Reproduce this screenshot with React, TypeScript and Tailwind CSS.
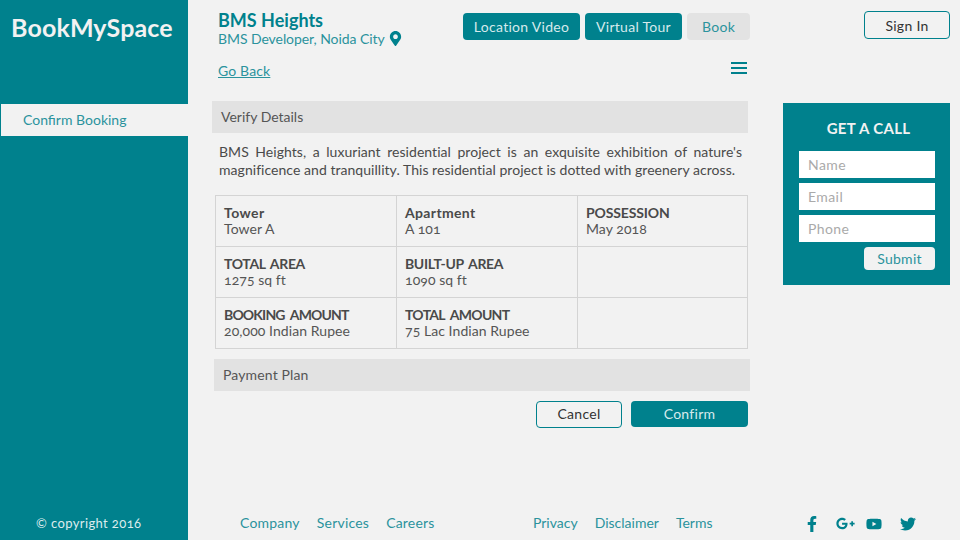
import { FaFacebookF, FaGooglePlusG, FaMapMarkerAlt, FaTwitter, FaYoutube } from 'react-icons/fa'

const rows = [
  [
    { label: 'Tower', value: 'Tower A', labelClass: 'tracking-[0.03em]' },
    { label: 'Apartment', value: 'A 101', labelClass: 'tracking-[0.025em]' },
    { label: 'POSSESSION', value: 'May 2018', labelClass: 'tracking-[-0.01em]' },
  ],
  [
    { label: 'TOTAL AREA', value: '1275 sq ft', labelClass: 'tracking-[-0.025em] [word-spacing:2px]' },
    { label: 'BUILT-UP AREA', value: '1090 sq ft', labelClass: 'tracking-[-0.025em] [word-spacing:2px]' },
    null,
  ],
  [
    { label: 'BOOKING AMOUNT', value: '20,000 Indian Rupee', labelClass: 'tracking-[-0.06em] [word-spacing:3px]' },
    { label: 'TOTAL AMOUNT', value: '75 Lac Indian Rupee', labelClass: 'tracking-[-0.05em] [word-spacing:3px]' },
    null,
  ],
]

export default function App() {
  return (
    <div className="flex h-[540px] w-[960px] overflow-hidden bg-[#f2f2f2] font-['Lato',sans-serif] text-[14px] text-[#4a4a4a] oldstyle-nums">
      {/* Sidebar */}
      <aside className="flex w-[188px] shrink-0 flex-col bg-[#00818d]">
        <div className="pt-[11px] pl-[11px] text-[25px] leading-[32px] font-bold tracking-[0.005em] whitespace-nowrap text-[#f2f2f2]">BookMySpace</div>
        <div className="mt-[61px] ml-px flex h-[32px] items-center bg-[#f2f2f2] pb-[2px] pl-[22px] text-[14px] text-[#2b939d]">Confirm Booking</div>
        <div className="mt-auto pb-[9px] pl-[36px] text-[13px] leading-[16px] tracking-[0.03em] text-[#dcecee]">© copyright 2016</div>
      </aside>

      <div className="flex min-w-0 flex-1 flex-col">
        <div className="flex flex-1">
          {/* Center column */}
          <main className="w-[595px] shrink-0 pl-[24px]">
            <div className="flex w-[538px] items-start justify-between pt-[10px] pl-[6px]">
              <div>
                <div className="text-[18px] leading-[20px] font-bold text-[#00818d]">BMS Heights</div>
                <div className="flex items-center gap-[3px] text-[14px] leading-[17px] tracking-[-0.005em] text-[#2b939d]">
                  BMS Developer, Noida City
                  <FaMapMarkerAlt className="text-[15px] text-[#00818d]" />
                </div>
              </div>
              <div className="mt-[3px] flex gap-[5px] text-[14px] tracking-[0.02em]">
                <button className="h-[27px] w-[117px] rounded-[4px] bg-[#00818d] text-[#d6eaec]">Location Video</button>
                <button className="h-[27px] w-[97px] rounded-[4px] bg-[#00818d] text-[#d6eaec]">Virtual Tour</button>
                <button className="h-[27px] w-[63px] rounded-[4px] bg-[#e3e3e3] text-[#2b939d]">Book</button>
              </div>
            </div>

            <div className="mt-[8px] flex w-[536px] items-start justify-between pl-[6px]">
              <a className="mt-[7px] text-[14px] leading-[18px] tracking-[0.01em] text-[#2b939d] underline">Go Back</a>
              <div className="mt-[7px] mr-px flex w-[16px] flex-col gap-[3px]">
                <span className="h-[2px] bg-[#00818d]" />
                <span className="h-[2px] bg-[#00818d]" />
                <span className="h-[2px] bg-[#00818d]" />
              </div>
            </div>

            <div className="mt-[21px] flex h-[32px] w-[536px] items-center bg-[#e2e2e2] pb-[2px] pl-[9px] text-[#555]">Verify Details</div>

            <p className="mt-[10px] w-[530px] pl-[7px] text-justify text-[14px] leading-[18px] tracking-[0.003em] text-[#4a4a4a]">
              BMS Heights, a luxuriant residential project is an exquisite exhibition of nature's magnificence and tranquillity. This residential project is dotted with greenery across.
            </p>

            <table className="mt-[16px] ml-[3px] w-[533px] table-fixed border-collapse">
              <tbody>
                {rows.map((row, i) => (
                  <tr key={i} className="h-[51px]">
                    {row.map((cell, j) => (
                      <td key={j} className={`border border-[#d4d4d4] px-[8px] align-middle text-[14px] leading-[16px] ${j === 2 ? 'w-[170px]' : 'w-[181px]'}`}>
                        {cell && (
                          <>
                            <div className={`font-bold whitespace-nowrap ${cell.labelClass}`}>{cell.label}</div>
                            <div className="tracking-[0.005em] whitespace-nowrap text-[#555]">{cell.value}</div>
                          </>
                        )}
                      </td>
                    ))}
                  </tr>
                ))}
              </tbody>
            </table>

            <div className="mt-[10px] ml-[2px] flex h-[32px] w-[536px] items-center bg-[#e2e2e2] pb-[2px] pl-[9px] tracking-[0.01em] text-[#555]">Payment Plan</div>

            <div className="mt-[10px] flex w-[536px] justify-end gap-[9px] text-[14px] tracking-[0.02em]">
              <button className="h-[27px] w-[86px] rounded-[4px] border border-[#00818d] pb-[2px] text-[#333]">Cancel</button>
              <button className="h-[26px] w-[117px] rounded-[4px] bg-[#00818d] pb-[2px] text-[#d6eaec]">Confirm</button>
            </div>
          </main>

          {/* Right column */}
          <div className="flex flex-1 flex-col pt-[11px]">
            <button className="ml-[81px] h-[28px] w-[86px] rounded-[4px] border border-[#00818d] text-[14px] tracking-[0.02em] text-[#333]">Sign In</button>
            <div className="mt-[64px] h-[182px] w-[167px] bg-[#00818d] px-[16px] pt-[15px]">
              <div className="pl-[4px] text-center text-[15px] leading-[20px] font-bold tracking-[0.02em] text-[#f2f2f2]">GET A CALL</div>
              <div className="mt-[13px] flex w-[136px] flex-col gap-[5px]">
                <input placeholder="Name" className="h-[27px] bg-white pl-[9px] text-[14px] tracking-[0.03em] placeholder:text-[#aaa]" />
                <input placeholder="Email" className="h-[27px] bg-white pl-[9px] text-[14px] tracking-[0.03em] placeholder:text-[#aaa]" />
                <input placeholder="Phone" className="h-[27px] bg-white pl-[9px] text-[14px] tracking-[0.03em] placeholder:text-[#aaa]" />
                <button className="ml-auto h-[23px] w-[71px] rounded-[4px] bg-[#f2f2f2] text-[14px] tracking-[0.02em] text-[#2b939d]">Submit</button>
              </div>
            </div>
          </div>
        </div>

        {/* Footer */}
        <footer className="flex h-[33px] items-start pt-[7px] text-[14px] leading-[18px] text-[#2b939d]">
          <nav className="ml-[52px] flex w-[293px] gap-[17px] tracking-[0.015em]">
            <a>Company</a>
            <a>Services</a>
            <a>Careers</a>
          </nav>
          <nav className="flex w-[272px] gap-[17px]">
            <a>Privacy</a>
            <a>Disclaimer</a>
            <a>Terms</a>
          </nav>
          <div className="-ml-px flex items-center text-[#00818d]">
            <FaFacebookF className="text-[16px]" />
            <FaGooglePlusG className="ml-[16px] text-[19px]" />
            <FaYoutube className="ml-[11px] text-[16px]" />
            <FaTwitter className="ml-[18px] text-[16px]" />
          </div>
        </footer>
      </div>
    </div>
  )
}
